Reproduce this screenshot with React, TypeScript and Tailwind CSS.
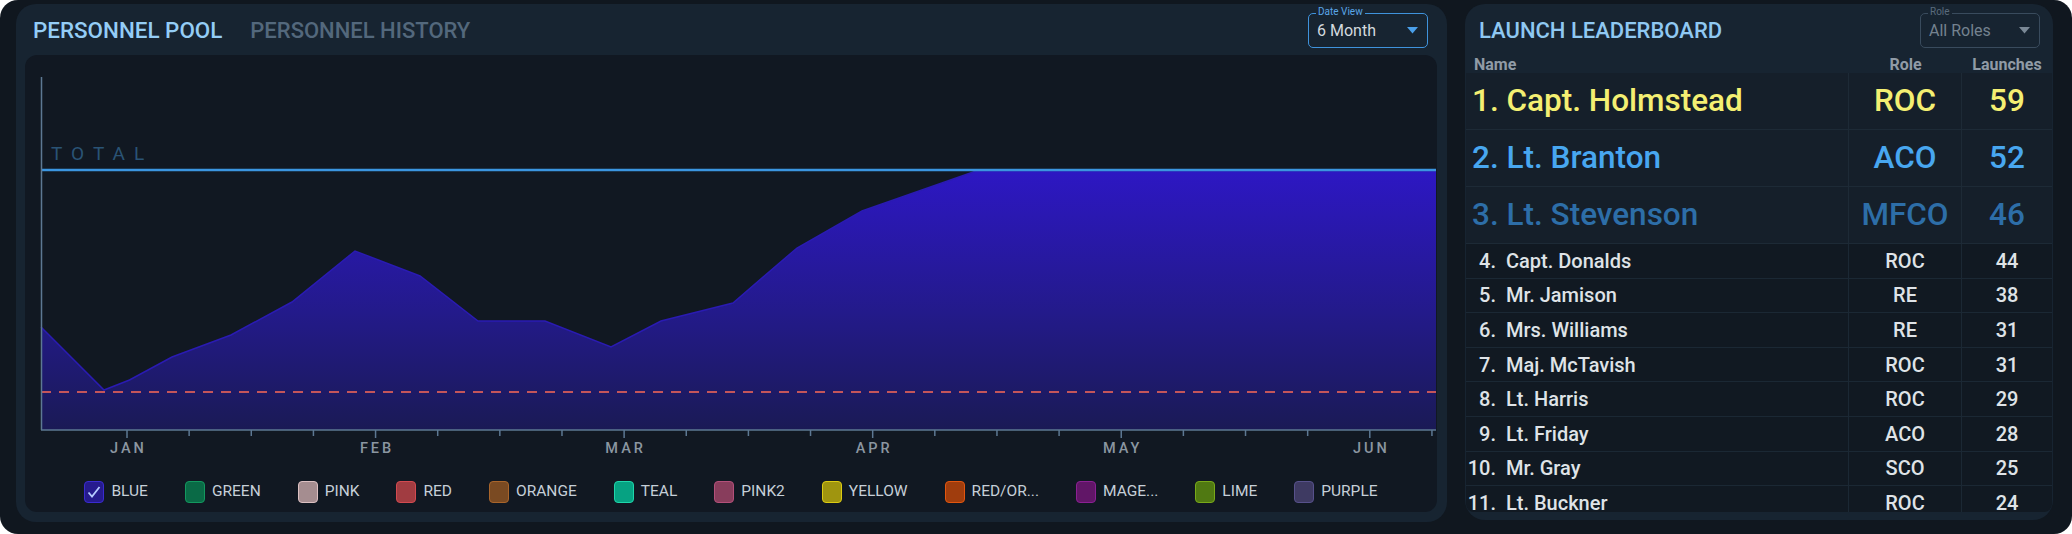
import React from "react";

const pts: [number, number][] = [
  [16, 272], [79, 335], [104.5, 325], [147, 302], [206, 280], [267, 247], [330, 196],
  [395, 221], [453, 266], [520, 266], [586, 292], [636, 266], [708, 248], [772, 193],
  [837, 156], [951, 116], [1411, 116],
];

const months = ["JAN", "FEB", "MAR", "APR", "MAY", "JUN"];

const legend = [
  { label: "BLUE", fill: "bg-[#261b8e]", border: "border-[#3a2bd0]", checked: true },
  { label: "GREEN", fill: "bg-[#0a6a46]", border: "border-[#13985f]" },
  { label: "PINK", fill: "bg-[#a58d90]", border: "border-[#dcc0c2]" },
  { label: "RED", fill: "bg-[#a13c41]", border: "border-[#d24a50]" },
  { label: "ORANGE", fill: "bg-[#7a4a22]", border: "border-[#a9652b]" },
  { label: "TEAL", fill: "bg-[#06a282]", border: "border-[#1fd6ab]" },
  { label: "PINK2", fill: "bg-[#883d5c]", border: "border-[#b3507a]" },
  { label: "YELLOW", fill: "bg-[#a0950f]", border: "border-[#dccb12]" },
  { label: "RED/OR...", fill: "bg-[#a03d0d]", border: "border-[#e2560f]" },
  { label: "MAGE...", fill: "bg-[#611667]", border: "border-[#8b2093]" },
  { label: "LIME", fill: "bg-[#507912]", border: "border-[#79a919]" },
  { label: "PURPLE", fill: "bg-[#3e3a62]", border: "border-[#57518b]" },
];

const top3 = [
  { rank: 1, name: "Capt. Holmstead", role: "ROC", n: 59, color: "text-[#f4ef72]" },
  { rank: 2, name: "Lt. Branton", role: "ACO", n: 52, color: "text-[#48a7f0]" },
  { rank: 3, name: "Lt. Stevenson", role: "MFCO", n: 46, color: "text-[#2d6ea8]" },
];

const rest: [number, string, string, number][] = [
  [4, "Capt. Donalds", "ROC", 44],
  [5, "Mr. Jamison", "RE", 38],
  [6, "Mrs. Williams", "RE", 31],
  [7, "Maj. McTavish", "ROC", 31],
  [8, "Lt. Harris", "ROC", 29],
  [9, "Lt. Friday", "ACO", 28],
  [10, "Mr. Gray", "SCO", 25],
  [11, "Lt. Buckner", "ROC", 24],
];

function Select({ label, value, active }: { label: string; value: string; active?: boolean }) {
  return (
    <div
      className={`relative w-[120px] h-[35px] shrink-0 rounded-[5px] border-[1.5px] flex items-center justify-between pl-[8px] pr-[9px] ${
        active ? "border-[#3f93dc]" : "border-[#394b5d]"
      }`}
    >
      <span
        className={`absolute -top-[8px] left-[7px] px-[2px] bg-[#172431] text-[10px] leading-[12px] ${
          active ? "text-[#5aa6e8]" : "text-[#5a6b7c]"
        }`}
      >
        {label}
      </span>
      <span className={`text-[16px] leading-none ${active ? "text-[#d3d9df]" : "text-[#74828f]"}`}>{value}</span>
      <svg width="11" height="7" viewBox="0 0 11 7">
        <polygon points="0,0 11,0 5.5,6.5" fill={active ? "#4a9fe9" : "#7a8896"} />
      </svg>
    </div>
  );
}

function Chart() {
  const line = pts.map((p, i) => `${i ? "L" : "M"}${p[0]},${p[1]}`).join(" ");
  const area = `M16,375 ${pts.map((p) => `L${p[0]},${p[1]}`).join(" ")} L1411,375 Z`;
  const ticks = Array.from({ length: 22 }, (_, k) => 102 + k * 62.14);
  return (
    <svg width="1412" height="410" viewBox="0 0 1412 410" className="block">
      <defs>
        <linearGradient id="ag" x1="0" y1="116" x2="0" y2="375" gradientUnits="userSpaceOnUse">
          <stop offset="0" stopColor="#2d17c3" />
          <stop offset="0.55" stopColor="#231a8a" />
          <stop offset="1" stopColor="#1a1a55" />
        </linearGradient>
      </defs>
      <path d={area} fill="url(#ag)" />
      <path d={line} fill="none" stroke="#2a1bb2" strokeWidth="1.5" />
      <text x="26" y="105" fill="#2a5375" fontSize="19" letterSpacing="9" fontFamily="Roboto, sans-serif">
        TOTAL
      </text>
      <line x1="16" y1="115" x2="1411" y2="115" stroke="#3b95e0" strokeWidth="2.5" />
      <line x1="16" y1="337" x2="1411" y2="337" stroke="#c4555a" strokeWidth="2" strokeDasharray="10 8" />
      <line x1="16.5" y1="22" x2="16.5" y2="375" stroke="#5d7893" strokeWidth="1.5" />
      <line x1="16" y1="375" x2="1411" y2="375" stroke="#5d7893" strokeWidth="1.5" />
      {ticks.map((x, k) => (
        <line key={k} x1={x} y1="375" x2={x} y2={k % 4 === 0 ? 383 : 381} stroke="#5d7893" strokeWidth="1.5" />
      ))}
      {months.map((m, i) => (
        <text
          key={m}
          x={102 + i * 4 * 62.14 + 1.5}
          y="398"
          fill="#8b96a1"
          fontSize="14.5"
          fontWeight="500"
          letterSpacing="3"
          textAnchor="middle"
          fontFamily="Roboto, sans-serif"
        >
          {m}
        </text>
      ))}
    </svg>
  );
}

export default function App() {
  return (
    <div className="w-[2072px] h-[534px] rounded-[18px] bg-[#10171f] flex gap-[18px] pl-[16px] pr-[19px] pt-[4px] pb-[12px] font-[Roboto,sans-serif]">
      {/* Left panel */}
      <div className="w-[1431px] h-[518px] rounded-[20px] bg-[#172431] flex flex-col pl-[9px] pr-[10px] pb-[10px]">
        <div className="h-[51px] flex items-start pt-[9px] shrink-0">
          <div className="flex-1 h-[35px] flex items-center gap-[28px] pl-[8px]">
            <span className="text-[22.4px] font-medium text-[#94cdf6] leading-none">PERSONNEL POOL</span>
            <span className="text-[22px] font-medium text-[#53687c] leading-none">PERSONNEL HISTORY</span>
          </div>
          <div className="mr-[9px]">
            <Select label="Date View" value="6 Month" active />
          </div>
        </div>
        <div className="flex-1 rounded-[12px] bg-[#111822] flex flex-col overflow-hidden">
          <Chart />
          <div className="h-[47px] pt-[6px] flex items-center justify-center gap-[37px]">
            {legend.map((l) => (
              <div key={l.label} className="flex items-center gap-[7px]">
                <div
                  className={`w-[20px] h-[22px] rounded-[4px] border-[1.5px] ${l.fill} ${l.border} flex items-center justify-center`}
                >
                  {l.checked && (
                    <svg width="16" height="16" viewBox="0 0 16 16">
                      <polyline points="2.5,8.5 6,12.5 13.5,3" fill="none" stroke="#b4c9ff" strokeWidth="1.8" />
                    </svg>
                  )}
                </div>
                <span className="text-[15.5px] text-[#c6cfd8] leading-none">{l.label}</span>
              </div>
            ))}
          </div>
        </div>
      </div>

      {/* Right panel */}
      <div className="flex-1 h-[516px] rounded-[20px] bg-[#172431] flex flex-col px-[1px] pb-[8px]">
        <div className="h-[52px] shrink-0 flex items-start pt-[9px] pr-[12px]">
          <div className="flex-1 h-[35px] flex items-center pl-[13px]">
            <span className="text-[22px] font-medium text-[#8fc8f2] leading-none">LAUNCH LEADERBOARD</span>
          </div>
          <Select label="Role" value="All Roles" />
        </div>
        <div className="h-[17px] shrink-0 flex items-center text-[16px] font-bold text-[#909ba6] leading-none">
          <div className="w-[383px] pl-[8px]">Name</div>
          <div className="w-[113px] text-center">Role</div>
          <div className="flex-1 text-center">Launches</div>
        </div>
        <div className="flex-1 overflow-hidden rounded-b-[8px] bg-[#111922]">
          {top3.map((r) => (
            <div
              key={r.rank}
              className={`h-[57px] flex items-stretch bg-[#151f2a] border-b border-[#1d2a36] text-[31.5px] font-medium ${r.color}`}
            >
              <div className="w-[383px] flex items-center pl-[6px] border-r border-[#1d2a36] whitespace-nowrap">
                {r.rank}. {r.name}
              </div>
              <div className="w-[113px] flex items-center justify-center border-r border-[#1d2a36]">{r.role}</div>
              <div className="flex-1 flex items-center justify-center">{r.n}</div>
            </div>
          ))}
          {rest.map(([rank, name, role, n]) => (
            <div
              key={rank}
              className="h-[34.6px] flex items-stretch border-b border-[#1b2834] text-[20px] font-medium text-[#dfe3e7]"
            >
              <div className="w-[383px] flex items-center border-r border-[#1b2834] whitespace-nowrap">
                <span className="w-[30px] text-right">{rank}.</span>
                <span className="ml-[10px]">{name}</span>
              </div>
              <div className="w-[113px] flex items-center justify-center border-r border-[#1b2834]">{role}</div>
              <div className="flex-1 flex items-center justify-center">{n}</div>
            </div>
          ))}
        </div>
      </div>
    </div>
  );
}
